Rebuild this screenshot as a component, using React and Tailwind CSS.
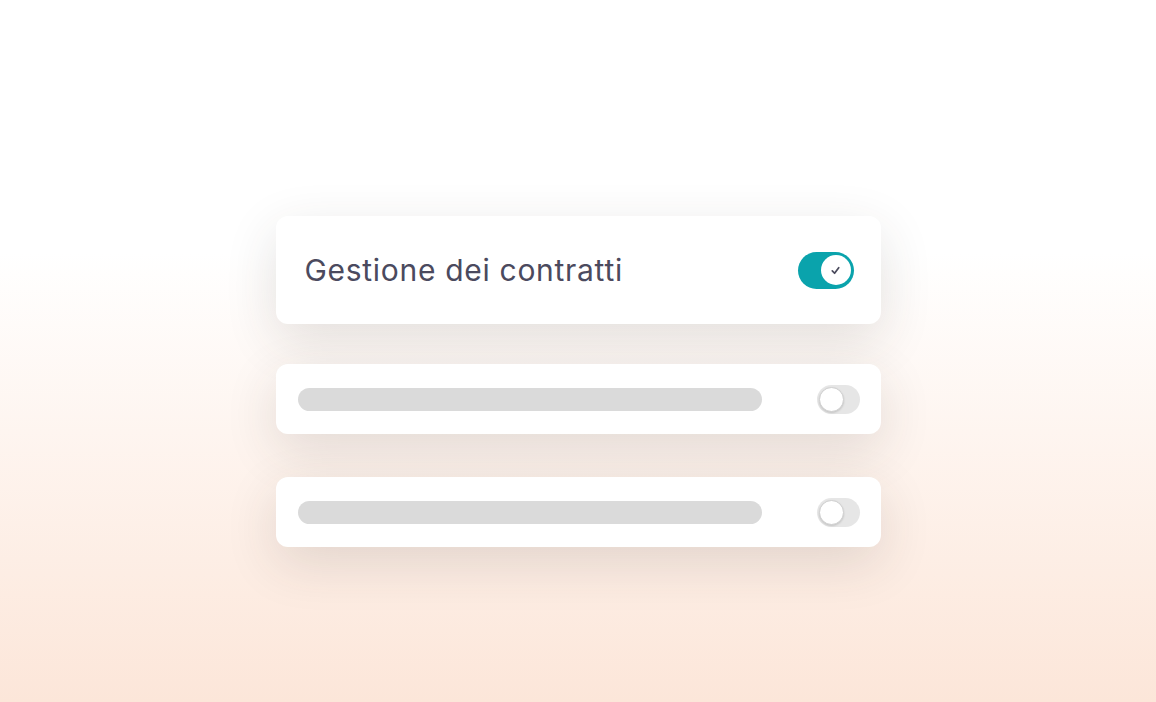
export default function App() {
  const rows = [1, 2];

  return (
    <div
      className="w-full h-[702px] bg-gradient-to-b from-white from-[36%] to-[#fce6d9] flex flex-col items-center pt-[216px]"
      style={{ fontFamily: 'Inter, "Noto Sans", sans-serif' }}
    >
      {/* carta principale */}
      <div className="w-[605px] h-[108px] bg-white rounded-[12px] shadow-[0_16px_52px_rgba(60,50,45,0.14)] flex items-center justify-between pl-[29px] pr-[27px]">
        <span className="text-[30px] leading-none text-[#4b4a5e] tracking-[0.7px]">Gestione dei contratti</span>
        <div className="w-[56px] h-[37px] rounded-full bg-[#0aa3ac] flex items-center justify-end pr-[3px]">
          <div className="w-[30px] h-[30px] rounded-full bg-white flex items-center justify-center">
            <svg width="11" height="11" viewBox="0 0 12 12" fill="none">
              <path d="M2.5 6.5 L5 9 L9.5 3" stroke="#4a4a5c" strokeWidth="1.9" strokeLinecap="round" strokeLinejoin="round" />
            </svg>
          </div>
        </div>
      </div>

      {rows.map((r, i) => (
        <div
          key={r}
          className={`w-[605px] h-[70px] bg-white rounded-[12px] shadow-[0_16px_52px_rgba(60,50,45,0.14)] flex items-center justify-between pl-[22px] pr-[21px] ${
            i === 0 ? 'mt-[40px]' : 'mt-[43px]'
          }`}
        >
          <div className="w-[464px] h-[23px] rounded-full bg-[#dadada]" />
          <div className="w-[43px] h-[29px] rounded-full bg-[#e6e6e6] flex items-center pl-[2px]">
            <div className="w-[25px] h-[25px] rounded-full bg-white border border-[#cfcfcf] shadow-[0_1px_2px_rgba(0,0,0,0.15)]" />
          </div>
        </div>
      ))}
    </div>
  );
}
